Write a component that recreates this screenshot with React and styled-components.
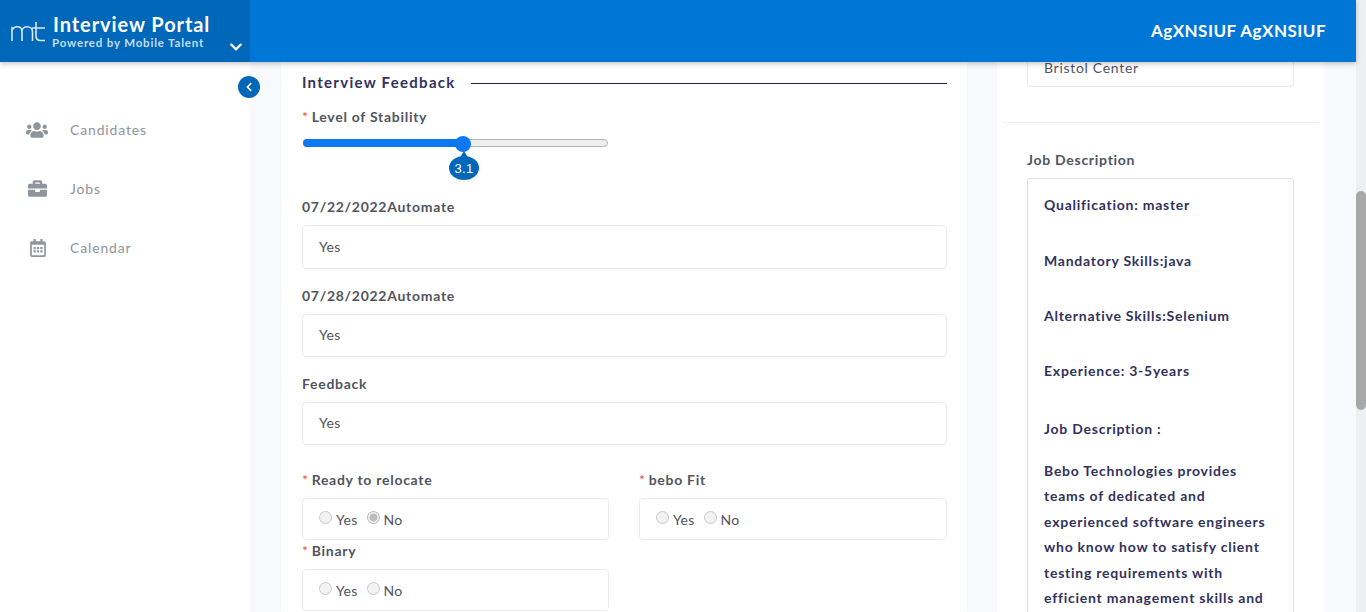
import React from 'react';
import styled, { createGlobalStyle } from 'styled-components';
import { FaUsers, FaBriefcase, FaRegCalendarAlt, FaChevronLeft, FaChevronDown } from 'react-icons/fa';

const Global = createGlobalStyle`
  html, body { margin: 0; padding: 0; height: 100%; overflow: hidden; }
  body { font-family: "Lato", "Liberation Sans", sans-serif; background: #f8f9fc; }
  * { box-sizing: border-box; }
`;

const Shell = styled.div`display: flex; width: 1366px; height: 612px; overflow: hidden;`;
const Page = styled.div`width: 1356px; display: flex; flex-direction: column; height: 612px;`;
const Track = styled.div`width: 10px; background: #eeeff1; padding-top: 191px;`;
const Thumb = styled.div`width: 10px; height: 219px; background: #a8a8a8; border-radius: 5px;`;

const Header = styled.header`
  height: 62px; flex: none; background: #0076d6; display: flex; align-items: stretch; justify-content: space-between;
  box-shadow: 0 2px 5px rgba(0,0,0,.22); position: relative; z-index: 3;
`;
const Brand = styled.div`
  width: 250px; background: #0067b9; display: flex; color: #fff; position: relative; padding: 12px 0 0 11px;
`;
const BrandText = styled.div`margin-left: 6px; display: flex; flex-direction: column;`;
const BrandTitle = styled.div`font-size: 20px; font-weight: 700; line-height: 24px; letter-spacing: .92px;`;
const BrandSub = styled.div`font-size: 11.5px; font-weight: 700; line-height: 13px; color: #c4def5; letter-spacing: .82px; margin-left: -1px;`;
const BrandChevron = styled.span`position: absolute; right: 7px; top: 40px; font-size: 14px; line-height: 0;`;
const User = styled.div`font-size: 17px; font-weight: 700; color: #fff; align-self: center; margin-right: 30px; letter-spacing: .48px; margin-top: -2px;`;

const Body = styled.div`flex: 1; display: flex; min-height: 0;`;
const Sidebar = styled.aside`width: 250px; background: #fff; position: relative; padding-top: 38px; flex: none;`;
const Collapse = styled.span`
  position: absolute; right: -10px; top: 14px; width: 22px; height: 22px; border-radius: 50%;
  background: #0067b9; box-shadow: 0 0 0 1px #fff; color: #fff; display: flex; align-items: center; justify-content: center; font-size: 10px; z-index: 2;
`;
const NavItem = styled.div`height: 59px; display: flex; align-items: center; color: #8f959b; font-size: 14px; letter-spacing: .85px;`;
const NavIcon = styled.span`width: 70px; padding-left: ${p => p.$pad || 26}px; display: flex; font-size: ${p => p.$size || 22}px; color: #8f959b;`;

const Main = styled.main`flex: 1; display: flex; padding-left: 31px; min-width: 0;`;
const Card = styled.section`width: 686px; background: #fff; padding: 10px 20px 0 21px; box-shadow: 0 0 4px rgba(0,0,0,.03); overflow: hidden;`;
const SectionHead = styled.div`display: flex; align-items: flex-start; height: 22px; margin-bottom: 13px;`;
const SectionTitle = styled.h2`margin: 0; font-size: 15px; font-weight: 700; color: #32325d; letter-spacing: 1.28px; line-height: 20px;`;
const Rule = styled.div`flex: 1; height: 1px; background: #23234a; margin: 11px 0 0 15px;`;
const Label = styled.div`
  font-size: 14px; font-weight: 700; color: #525560; letter-spacing: .72px; line-height: 20px;
`;
const Req = styled.span`color: #f5473f; font-weight: 400; margin-right: 3px;`;
const SliderWrap = styled.div`position: relative; width: 305px; height: 8px; margin: 12px 0 0 1px; background: #efefef; border: 1px solid #b5b5b5; border-radius: 5px; `;
const SliderFill = styled.div`height: 8px; margin: -1px; background: #0d78f2; border-radius: 5px 0 0 5px;`;
const Knob = styled.span`position: absolute; top: -4px; width: 16px; height: 16px; margin-left: -8px; border-radius: 50%; background: #0d78f2;`;
const Bubble = styled.span`
  position: absolute; top: 16px; width: 30px; height: 24px; margin-left: -15px; border-radius: 50%; background: #0067b9; color: #fff;
  font: 13px/25px "Liberation Sans", sans-serif; text-align: center; letter-spacing: .3px;
  &::before { content: ''; position: absolute; left: 10px; top: -5px; border: 5px solid transparent; border-top: 0; border-bottom: 8px solid #0067b9; }
`;
const Field = styled.div`margin-top: ${p => p.$mt}px;`;
const Box = styled.div`
  border: 1px solid #e9ecef; border-radius: 4px; background: #fff; padding: 0 16px ${p => p.$pb || 0}px; display: flex; align-items: center;
  font-size: 14px; color: #525560; letter-spacing: .3px; height: ${p => p.$h || 44}px; margin-top: ${p => p.$mt ?? 8}px;
`;
const Cols = styled.div`display: grid; grid-template-columns: 307px 308px; column-gap: 30px; margin-top: 25px;`;
const Radio = styled.span`
  width: 13px; height: 13px; border-radius: 50%; border: 1px solid #c9c9c9; background: #f2f2f2; display: inline-block; margin-right: 4px; margin-top: -3px; flex: none;
  ${p => p.$on ? `background: radial-gradient(circle, #bdbdbd 0 3.5px, #f2f2f2 4.5px); border-color:#b5b5b5;` : ''}
`;
const RadioLabel = styled.span`margin-right: 9px; letter-spacing: .3px;`;

const Side = styled.section`width: 327px; margin-left: 30px; background: #fff; overflow: hidden;`;
const Top = styled.div`
  margin: 0 30px 0 30px; height: 25px; border: 1px solid #e9ecef; border-top: 0; border-radius: 0 0 4px 4px; padding: 0 16px; font-size: 14px; color: #525560; letter-spacing: .7px; line-height: 12px;
`;
const Divider = styled.div`height: 1px; background: #eef0f3; margin: 35px 5px 27px 5px;`;
const SideLabel = styled(Label)`margin: 0 0 8px 30px; letter-spacing: .72px;`;
const Desc = styled.div`margin: 0 30px; border: 1px solid #dee2e6; border-bottom: 0; border-radius: 4px 4px 0 0; padding: 15px 16px 0; color: #32325d; font-size: 14px; font-weight: 700; letter-spacing: .76px; height: 500px;`;
const P = styled.p`margin: 0 0 ${p => p.$mb}px; line-height: ${p => p.$lh || 21}px; white-space: nowrap;`;

const Logo = () => (
  <svg width="36" height="24" viewBox="0 0 36 24" fill="none" stroke="#d8e9f9" strokeWidth="1.6" style={{ marginTop: 8 }}>
    <path d="M1 21V6.800M1 11c.8-3 3-4.300 5.200-4.300 3 0 4.800 2 4.800 5V21M11 11.500c0-3 2.300-4.800 5-4.800 3.200 0 5.500 2 5.500 5V21" />
    <path d="M25 2v14c0 3 1.500 4.500 4.500 4.500H34M21 8h13" />
  </svg>
);

const RadioSet = ({ on }) => (
  <>
    <Radio /><RadioLabel>Yes</RadioLabel>
    <Radio $on={on} /><RadioLabel>No</RadioLabel>
  </>
);

const DescLines = ['Bebo Technologies provides', 'teams of dedicated and', 'experienced software engineers', 'who know how to satisfy client', 'testing requirements with', 'efficient management skills and'];

export default function App() {
  return (
    <Shell>
      <Global />
      <Page>
        <Header>
          <Brand>
            <Logo />
            <BrandText>
              <BrandTitle>Interview Portal</BrandTitle>
              <BrandSub>Powered by Mobile Talent</BrandSub>
            </BrandText>
            <BrandChevron><FaChevronDown /></BrandChevron>
          </Brand>
          <User>AgXNSIUF AgXNSIUF</User>
        </Header>
        <Body>
          <Sidebar>
            <Collapse><FaChevronLeft /></Collapse>
            <NavItem><NavIcon><FaUsers /></NavIcon>Candidates</NavItem>
            <NavItem><NavIcon $pad={28} $size={19}><FaBriefcase /></NavIcon>Jobs</NavItem>
            <NavItem><NavIcon $pad={29} $size={18}><FaRegCalendarAlt /></NavIcon>Calendar</NavItem>
          </Sidebar>
          <Main>
            <Card>
              <SectionHead><SectionTitle>Interview Feedback</SectionTitle><Rule /></SectionHead>
              <Label><Req>*</Req>Level of Stability</Label>
              <SliderWrap>
                <SliderFill style={{ width: `${(160 / 305) * 100}%` }} />
                <Knob style={{ left: 159 }} />
                <Bubble style={{ left: 160 }}>3.1</Bubble>
              </SliderWrap>
              <Field $mt={50}><Label>07/22/2022Automate</Label><Box $pb={2}>Yes</Box></Field>
              <Field $mt={17}><Label>07/28/2022Automate</Label><Box $h={43} $pb={2}>Yes</Box></Field>
              <Field $mt={17}><Label>Feedback</Label><Box $h={43} $pb={2}>Yes</Box></Field>
              <Cols>
                <div>
                  <Label><Req>*</Req>Ready to relocate</Label>
                  <Box $h={42}><RadioSet on /></Box>
                  <Field $mt={1}><Label><Req>*</Req>Binary</Label></Field>
                  <Box $h={42}><RadioSet /></Box>
                </div>
                <div>
                  <Label><Req>*</Req>bebo Fit</Label>
                  <Box $h={42}><RadioSet /></Box>
                </div>
              </Cols>
            </Card>
            <Side>
              <Top>Bristol Center</Top>
              <Divider />
              <SideLabel>Job Description</SideLabel>
              <Desc>
                <P $mb={35}>Qualification: master</P>
                <P $mb={34}>Mandatory Skills:java</P>
                <P $mb={34}>Alternative Skills:Selenium</P>
                <P $mb={37}>Experience: 3-5years</P>
                <P $mb={19}>Job Description :</P>
                {DescLines.map(t => <P key={t} $lh={25.4} $mb={0}>{t}</P>)}
              </Desc>
            </Side>
          </Main>
        </Body>
      </Page>
      <Track><Thumb /></Track>
    </Shell>
  );
}
